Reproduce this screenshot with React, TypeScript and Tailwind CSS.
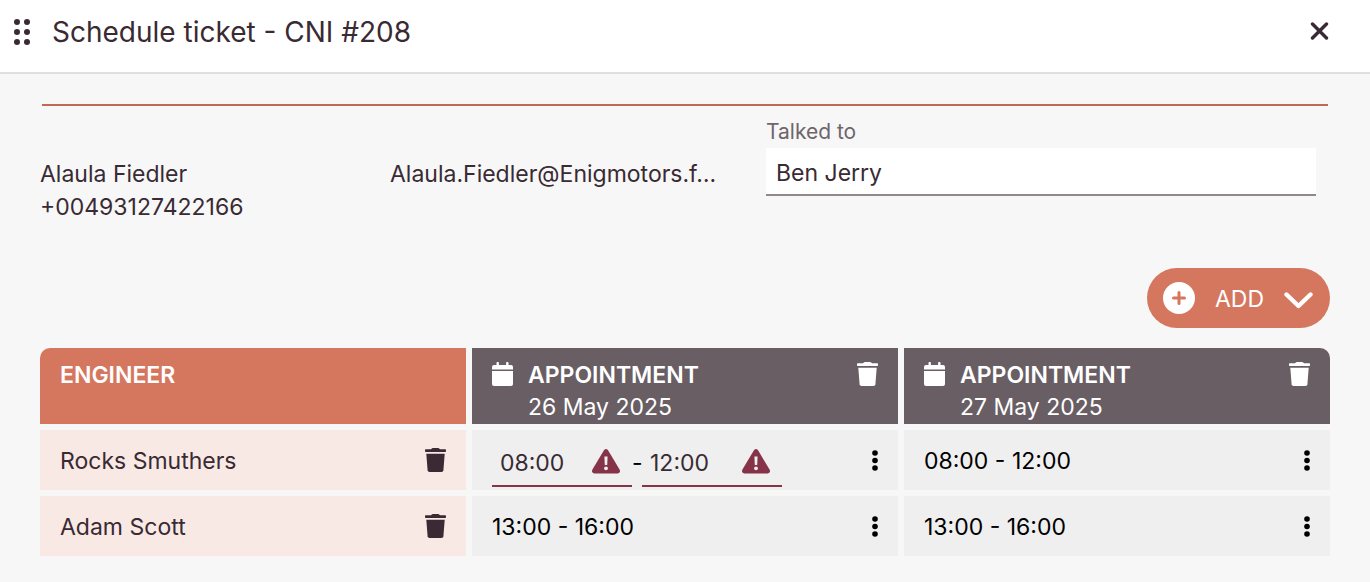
import React, { useState } from 'react';

interface IconProps {
  className?: string;
}

interface Engineer {
  id: number;
  name: string;
  slots: { from: string; to: string; conflict?: boolean }[];
}

const appointments = ['26 May 2025', '27 May 2025'];

const engineers: Engineer[] = [
  {
    id: 1,
    name: 'Rocks Smuthers',
    slots: [
      { from: '08:00', to: '12:00', conflict: true },
      { from: '08:00', to: '12:00' },
    ],
  },
  {
    id: 2,
    name: 'Adam Scott',
    slots: [
      { from: '13:00', to: '16:00' },
      { from: '13:00', to: '16:00' },
    ],
  },
];

const GripIcon: React.FC<IconProps> = ({ className }) => (
  <svg className={className} width="16" height="26" viewBox="0 0 16 26" fill="currentColor" aria-hidden="true">
    {[3, 13].map((x) => [3, 13, 23].map((y) => <circle key={`${x}-${y}`} cx={x} cy={y} r="3" />))}
  </svg>
);

const CloseIcon: React.FC<IconProps> = ({ className }) => (
  <svg className={className} width="20" height="20" viewBox="0 0 20 20" fill="none" stroke="currentColor" strokeWidth="3.4" strokeLinecap="round" aria-hidden="true">
    <path d="M2.500 2 16.500 16M16.500 2 2.500 16" />
  </svg>
);

const TrashIcon: React.FC<IconProps> = ({ className }) => (
  <svg className={className} width="21" height="24" viewBox="0 0 21 24" fill="currentColor" aria-hidden="true">
    <path d="M.8 1.2H6L6.8.4Q7.2 0 7.8 0h5.4q.6 0 1 .4l.8.8h5.2q.8 0 .8.8v1.3q0 .8-.8.8H.8Q0 4.100 0 3.300V2q0-.8.8-.8Z" />
    <path d="M1.300 5.800h18.400l-1.300 16.400Q18.200 24 16.500 24h-12Q2.800 24 2.600 22.200Z" />
  </svg>
);

const CalendarIcon: React.FC<IconProps> = ({ className }) => (
  <svg className={className} width="21" height="24" viewBox="0 0 21 24" fill="currentColor" aria-hidden="true">
    <path d="M0 7.500V5q0-2 2-2h2.500V.8q0-.8.8-.8h.8q.8 0 .8.8V3h7.200V.8q0-.8.8-.8h.8q.8 0 .8.8V3H19q2 0 2 2v2.500Z" />
    <path d="M0 9h21v13q0 2-2 2H2q-2 0-2-2Z" />
  </svg>
);

const WarningIcon: React.FC<IconProps> = ({ className }) => (
  <svg className={className} width="28" height="26" viewBox="0 0 28 26" aria-hidden="true">
    <path d="M12.100 1.100Q14-1 15.900 1.100L27.700 20.700Q28.700 24 25.700 24.500H2.300Q-.7 24 .3 20.700Z" fill="currentColor" />
    <path d="M12.400 7.500h3.200l-.4 8.500h-2.400Z" fill="#efefef" />
    <circle cx="14" cy="19.300" r="1.900" fill="#efefef" />
  </svg>
);

const DotsIcon: React.FC<IconProps> = ({ className }) => (
  <svg className={className} width="6" height="21" viewBox="0 0 6 21" fill="currentColor" aria-hidden="true">
    <circle cx="3" cy="3" r="2.800" />
    <circle cx="3" cy="10.500" r="2.800" />
    <circle cx="3" cy="18" r="2.800" />
  </svg>
);

const TimeField: React.FC<{ label: string; initial: string }> = ({ label, initial }) => {
  const [value, setValue] = useState(initial);

  return (
    <div className="flex h-12 w-[140px] items-center border-b-2 border-[#863349] pr-3 pl-2">
      <input
        aria-label={label}
        value={value}
        onChange={(e) => setValue(e.target.value)}
        className="min-w-0 flex-1 bg-transparent pt-0.5 text-[#392a33] outline-none"
      />
      <WarningIcon className="shrink-0 text-[#863349]" />
    </div>
  );
};

export default function App() {
  const [talkedTo, setTalkedTo] = useState('Ben Jerry');

  return (
    <div className="min-h-screen bg-[#f7f7f7] font-['Inter',sans-serif] text-[23px] text-[#392a33]">
      {/* Title bar */}
      <header className="flex h-[74px] items-center border-b-2 border-[#e0e0e0] bg-white pr-10 pb-2 pl-3.5">
        <GripIcon />
        <h1 className="ml-[22px] flex-1 text-[28px]">Schedule ticket - CNI #208</h1>
        <button type="button" aria-label="Close">
          <CloseIcon />
        </button>
      </header>

      <main className="px-10 pt-[30px]">
        <hr className="mx-0.5 border-t-2 border-[#bf6a52]" />

        {/* Contact */}
        <section className="grid grid-cols-[350fr_376fr_550fr] pr-3.5">
          <div className="pt-[52px] leading-[33px]">
            <p>Alaula Fiedler</p>
            <p>+00493127422166</p>
          </div>
          <p className="pt-[52px] leading-[33px] whitespace-nowrap">Alaula.Fiedler@Enigmotors.f…</p>
          <div className="flex flex-col pt-2.5">
            <label htmlFor="talked-to" className="text-[21px] leading-8 text-[#6f656b]">Talked to</label>
            <input
              id="talked-to"
              value={talkedTo}
              onChange={(e) => setTalkedTo(e.target.value)}
              className="h-12 w-full border-b-2 border-[#8f888c] bg-white px-2.5 pt-1 outline-none"
            />
          </div>
        </section>

        <div className="mt-11 flex justify-end">
          <button type="button" className="flex h-[60px] items-center rounded-full bg-[#d5775f] px-4 text-white">
            <svg width="32" height="32" viewBox="0 0 32 32" aria-hidden="true">
              <circle cx="16" cy="16" r="16" fill="white" />
              <path d="M16 10.500v11M10.500 16h11" stroke="#d5775f" strokeWidth="3" strokeLinecap="round" />
            </svg>
            <span className="mx-5 pt-0.5">ADD</span>
            <svg width="30" height="22" viewBox="0 0 30 22" fill="none" stroke="currentColor" strokeWidth="4.400" strokeLinecap="round" strokeLinejoin="round" aria-hidden="true">
              <path d="M2.500 7.500 14.500 19 26.500 7.500" />
            </svg>
          </button>
        </div>

        {/* Schedule */}
        <div className="-mx-1.5 mt-3.5">
          <table className="w-full table-fixed border-separate border-spacing-1.5">
            <thead>
              <tr className="h-[76px] text-left align-top leading-8 text-white">
                <th className="rounded-tl-[10px] bg-[#d5775f] px-5 pt-[11px] font-semibold">ENGINEER</th>
                {appointments.map((date) => (
                  <th key={date} className="bg-[#685e63] px-5 pt-[11px] font-normal last:rounded-tr-[10px]">
                    <div className="flex items-start">
                      <CalendarIcon className="mt-[3px] mr-[15px]" />
                      <div className="flex-1">
                        <div className="font-semibold">APPOINTMENT</div>
                        <div>{date}</div>
                      </div>
                      <button type="button" aria-label={`Delete ${date}`} className="mt-[3px]">
                        <TrashIcon />
                      </button>
                    </div>
                  </th>
                ))}
              </tr>
            </thead>
            <tbody>
              {engineers.map((engineer) => (
                <tr key={engineer.id} className="h-[60px]">
                  <td className="bg-[#f8e9e5] px-5">
                    <div className="flex items-center justify-between">
                      <span className="pt-0.5">{engineer.name}</span>
                      <button type="button" aria-label={`Remove ${engineer.name}`}>
                        <TrashIcon />
                      </button>
                    </div>
                  </td>
                  {engineer.slots.map((slot, i) => (
                    <td key={i} className="bg-[#efefef] px-5 text-black">
                      <div className="flex items-center">
                        {slot.conflict ? (
                          <div className="flex flex-1 items-center pt-1.5">
                            <TimeField label="Start time" initial={slot.from} />
                            <span className="w-2.5 text-center">-</span>
                            <TimeField label="End time" initial={slot.to} />
                          </div>
                        ) : (
                          <span className="flex-1 pt-0.5">{slot.from} - {slot.to}</span>
                        )}
                        <button type="button" aria-label="More options">
                          <DotsIcon />
                        </button>
                      </div>
                    </td>
                  ))}
                </tr>
              ))}
            </tbody>
          </table>
        </div>
      </main>
    </div>
  );
}
